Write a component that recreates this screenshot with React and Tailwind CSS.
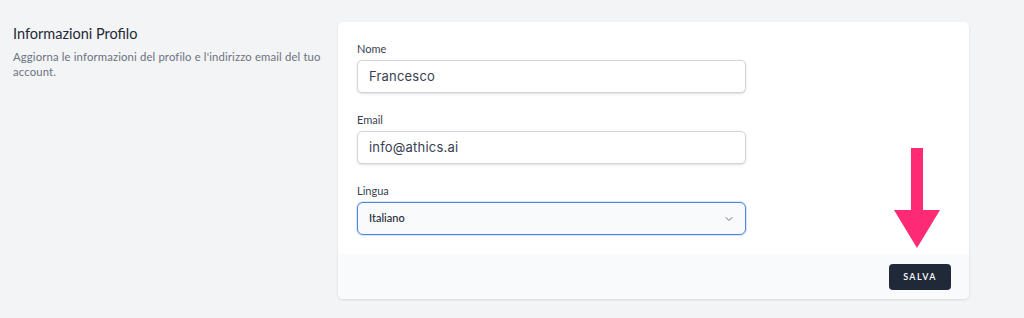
import { ChevronDown } from 'lucide-react';

const Field = ({ label, value, first }) => (
    <div className={first ? '' : 'mt-[19px]'}>
        <label className="block text-[11px] leading-[15px] text-[#374151]">{label}</label>
        <div className="mt-[4px] h-[33px] w-[389px] rounded-[5px] border border-[#d1d5db] bg-white shadow-sm flex items-center px-[11px]">
            <span className="text-[13px] text-[#374151] font-['Inter',sans-serif] tracking-[0.2px]">{value}</span>
        </div>
    </div>
);

const App = () => {
    return (
        <div className="relative h-[318px] w-[1024px] bg-[#f3f4f6] font-['Lato',sans-serif] flex items-start pt-[22px]">
            {/* left description */}
            <div className="w-[338px] shrink-0 pl-[13px] pr-[8px] pt-[2px]">
                <h3 className="text-[14.5px] leading-[20px] text-[#1f2937]">Informazioni Profilo</h3>
                <p className="mt-[5px] text-[11.3px] leading-[15px] text-[#6b7280] tracking-[0.15px]">
                    Aggiorna le informazioni del profilo e l'indirizzo email del tuo account.
                </p>
            </div>

            {/* card */}
            <div className="w-[631px] rounded-[5px] bg-white shadow-[0_1px_3px_rgba(0,0,0,0.08),0_1px_2px_rgba(0,0,0,0.04)] overflow-hidden">
                <div className="px-[19px] pt-[19px] pb-[19px]">
                    <Field label="Nome" value="Francesco" first />
                    <Field label="Email" value="info@athics.ai" />
                    <div className="mt-[19px]">
                        <label className="block text-[11px] leading-[15px] text-[#374151]">Lingua</label>
                        <div className="mt-[4px] h-[33px] w-[389px] rounded-[6px] border-[1.5px] border-[#4f84e0] bg-[#f9fafb] flex items-center justify-between pl-[11px] pr-[10px] shadow-[0_0_0_1px_rgba(147,183,240,0.35)]">
                            <span className="text-[11px] text-[#1f2937] font-medium">Italiano</span>
                            <ChevronDown size={12} strokeWidth={2} className="text-[#6b7280]" />
                        </div>
                    </div>
                </div>
                <div className="h-[45px] bg-[#f9fafb] flex items-center justify-end px-[18px]">
                    <button className="h-[26px] w-[62px] rounded-[4px] bg-[#1f2937] text-white text-[9px] font-semibold tracking-[1.4px]">
                        SALVA
                    </button>
                </div>
            </div>

            {/* annotation arrow */}
            <svg className="absolute left-[894px] top-[148px]" width="46" height="101" viewBox="0 0 46 101">
                <rect x="17" y="0" width="12" height="63" fill="#fe2a74" />
                <polygon points="0,62 46,62 23,100" fill="#fe2a74" />
            </svg>
        </div>
    );
};

export default App;
